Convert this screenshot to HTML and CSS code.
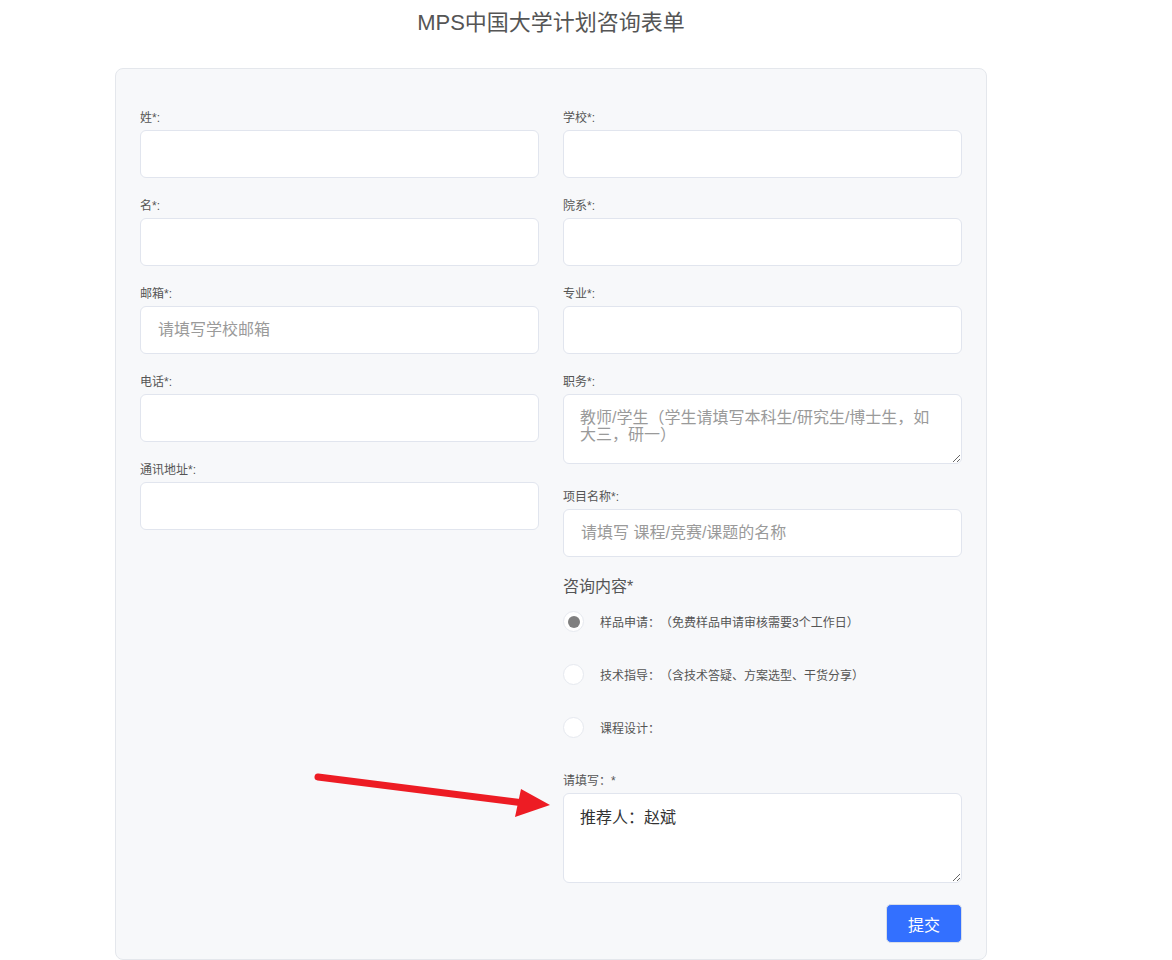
FILE: index.html
```html
<!DOCTYPE html>
<html lang="zh-CN">
<head>
<meta charset="utf-8">
<title>MPS中国大学计划咨询表单</title>
<link rel="stylesheet" href="styles.css">
</head>
<body>
<div class="page">
  <h1 class="page-title">MPS中国大学计划咨询表单</h1>
  <form class="card">
    <div class="grid">
      <div class="col">
        <div class="field">
          <label class="field-label">姓*:</label>
          <input class="input" type="text">
        </div>
        <div class="field">
          <label class="field-label">名*:</label>
          <input class="input" type="text">
        </div>
        <div class="field">
          <label class="field-label">邮箱*:</label>
          <input class="input" type="text" placeholder="请填写学校邮箱">
        </div>
        <div class="field">
          <label class="field-label">电话*:</label>
          <input class="input" type="text">
        </div>
        <div class="field">
          <label class="field-label">通讯地址*:</label>
          <input class="input" type="text">
        </div>
      </div>
      <div class="col">
        <div class="field">
          <label class="field-label">学校*:</label>
          <input class="input" type="text">
        </div>
        <div class="field">
          <label class="field-label">院系*:</label>
          <input class="input" type="text">
        </div>
        <div class="field">
          <label class="field-label">专业*:</label>
          <input class="input" type="text">
        </div>
        <div class="field field--area">
          <label class="field-label">职务*:</label>
          <textarea class="input textarea textarea--short" placeholder="教师/学生（学生请填写本科生/研究生/博士生，如大三，研一）"></textarea>
        </div>
        <div class="field">
          <label class="field-label">项目名称*:</label>
          <input class="input" type="text" placeholder="请填写 课程/竞赛/课题的名称">
        </div>
        <div class="group-title">咨询内容*</div>
        <div class="radios">
          <label class="radio-row"><span class="radio radio--on"></span><span class="radio-text">样品申请：（免费样品申请审核需要3个工作日）</span></label>
          <label class="radio-row"><span class="radio"></span><span class="radio-text">技术指导：（含技术答疑、方案选型、干货分享）</span></label>
          <label class="radio-row"><span class="radio"></span><span class="radio-text">课程设计：</span></label>
        </div>
        <div class="field field--last">
          <label class="field-label">请填写：*</label>
          <textarea class="input textarea textarea--tall">推荐人：赵斌</textarea>
        </div>
        <div class="actions">
          <button class="submit" type="button">提交</button>
        </div>
      </div>
    </div>
  </form>
</div>
<svg class="annotation" width="1172" height="960" viewBox="0 0 1172 960">
  <line x1="318" y1="777" x2="524" y2="803" stroke="#ed1c24" stroke-width="7" stroke-linecap="round"/>
  <polygon points="521,789 550,805 515,817" fill="#ed1c24"/>
</svg>
</body>
</html>
```

FILE: styles.css
```css
* {
  box-sizing: border-box;
}

body {
  margin: 0;
  background: #ffffff;
  font-family: "Liberation Sans", "Noto Sans CJK SC", sans-serif;
  color: #555;
  text-spacing-trim: space-all;
}

.page {
  width: 872px;
  margin-left: 115px;
}

.page-title {
  margin: 10px 0 33px;
  font-size: 22px;
  line-height: 25px;
  font-weight: normal;
  text-align: center;
  color: #555;
}

.card {
  display: block;
  background: #f7f8fa;
  border: 1px solid #e4e7ec;
  border-radius: 8px;
  padding: 41px 24px 16px;
}

.grid {
  display: grid;
  grid-template-columns: 1fr 1fr;
  column-gap: 24px;
  align-items: start;
}

.field {
  margin-bottom: 20px;
}

.field--area {
  margin-bottom: 25px;
}

.field--last {
  margin-bottom: 21px;
}

.field-label {
  display: block;
  font-size: 12px;
  line-height: 17px;
  margin-bottom: 3px;
  color: #555;
}

.input {
  display: block;
  width: 100%;
  height: 48px;
  margin: 0;
  padding: 0 17px;
  background: #fff;
  border: 1px solid #e1e5ee;
  border-radius: 6px;
  font-family: "Liberation Sans", "Noto Sans CJK SC", sans-serif;
  font-size: 16px;
  color: #333;
  outline: none;
  text-spacing-trim: space-all;
}

.input::placeholder {
  color: #9a9a9a;
}

.textarea {
  padding: 14px 16px;
  line-height: 17px;
  resize: vertical;
}

.textarea--short {
  height: 70px;
}

.textarea--tall {
  height: 90px;
  padding-top: 15px;
  color: #333;
}

.group-title {
  font-size: 16px;
  line-height: 22px;
  margin-top: -1px;
  margin-bottom: 13px;
  color: #555;
}

.radios {
  display: flex;
  flex-direction: column;
  gap: 32px;
  margin-bottom: 35px;
}

.radio-row {
  display: flex;
  align-items: center;
  gap: 16px;
  height: 21px;
}

.radio {
  width: 21px;
  height: 21px;
  border-radius: 50%;
  background: #fff;
  border: 1px solid #e6e9ef;
  display: flex;
  align-items: center;
  justify-content: center;
  flex: none;
}

.radio--on::after {
  content: "";
  width: 12px;
  height: 12px;
  border-radius: 50%;
  background: #7f7f7f;
}

.radio-text {
  font-size: 12px;
  line-height: 17px;
  padding-top: 3px;
  color: #555;
}

.actions {
  display: flex;
  justify-content: flex-end;
}

.submit {
  width: 76px;
  height: 39px;
  border: 1px solid #d9dee8;
  border-radius: 5px;
  background: #3370ff;
  color: #fff;
  font-family: "Liberation Sans", "Noto Sans CJK SC", sans-serif;
  font-size: 16px;
  cursor: pointer;
}

.annotation {
  position: absolute;
  left: 0;
  top: 0;
  pointer-events: none;
}
```
